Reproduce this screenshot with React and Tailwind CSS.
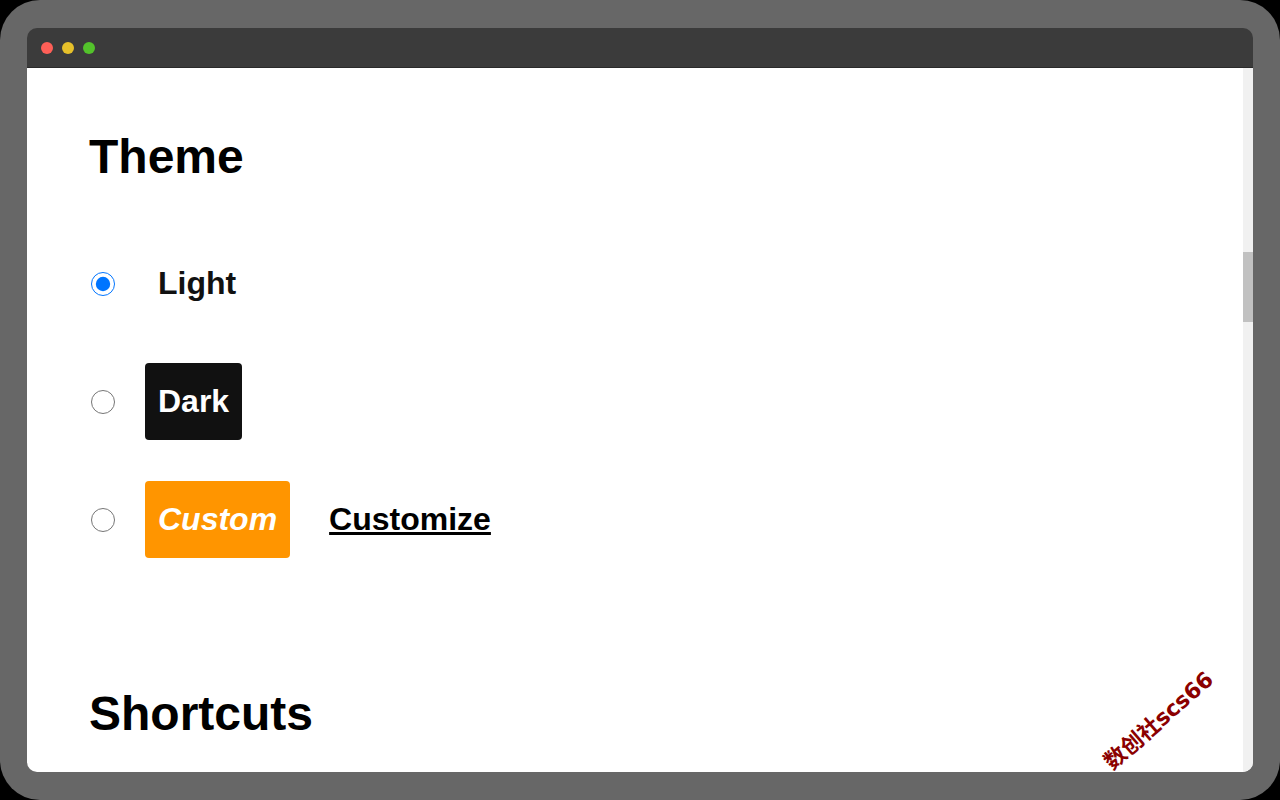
import { useState } from 'react';

const themes = [
  { id: 'light', label: 'Light', box: 'text-[#111]' },
  { id: 'dark', label: 'Dark', box: 'bg-[#111] text-white' },
  { id: 'custom', label: 'Custom', box: 'bg-[#ff9500] text-white italic' },
];

export default function App() {
  const [theme, setTheme] = useState('light');

  return (
    <div className="w-[1280px] h-[800px] bg-black font-['Liberation_Sans',Arial,sans-serif]">
      <div className="relative h-full rounded-[40px] bg-[#676767] pt-[28px] px-[27px] pb-[28px]">
        <div className="flex flex-col h-full rounded-[10px] overflow-hidden">
          {/* title bar */}
          <div className="flex items-center gap-[9px] pl-[14px] h-[40px] shrink-0 bg-[#3b3b3b] border-b border-[#2a2a2a]">
            <span className="w-3 h-3 rounded-full bg-[#fe5f57]" />
            <span className="w-3 h-3 rounded-full bg-[#e6c02a]" />
            <span className="w-3 h-3 rounded-full bg-[#53c22b]" />
          </div>

          <div className="flex flex-1 min-h-0 bg-white">
            <div className="flex-1 overflow-hidden pl-[62px] pt-[61px]">
              <h1 className="text-[48px] font-bold leading-[55px] text-black">Theme</h1>

              <div className="mt-[61px] flex flex-col gap-[41px]">
                {themes.map((t) => (
                  <label key={t.id} className="flex items-center h-[77px] cursor-pointer">
                    <input
                      type="radio"
                      name="theme"
                      checked={theme === t.id}
                      onChange={() => setTheme(t.id)}
                      className="w-6 h-6 m-0 ml-[2px]"
                    />
                    <span
                      className={`ml-[30px] px-[13px] py-[20px] rounded-[4px] text-[32px] font-bold leading-[37px] ${t.box}`}
                    >
                      {t.label}
                    </span>
                    {t.id === 'custom' && (
                      <a href="#" className="ml-[39px] text-[32px] font-bold leading-[37px] text-black underline">
                        Customize
                      </a>
                    )}
                  </label>
                ))}
              </div>

              <h2 className="mt-[128px] text-[48px] font-bold leading-[55px] text-black">Shortcuts</h2>
            </div>

            {/* scrollbar */}
            <div className="w-[10px] shrink-0 bg-[#f1f1f1]">
              <div className="mt-[184px] h-[70px] bg-[#c1c1c1]" />
            </div>
          </div>
        </div>

        <span className="absolute left-[1089px] top-[708px] w-[140px] text-center rotate-[-41deg] text-[22px] font-bold leading-[26px] text-[#8b0000] font-['DejaVu_Sans','Noto_Sans_CJK_SC',sans-serif] whitespace-nowrap">
          数创社scs66
        </span>
      </div>
    </div>
  );
}
